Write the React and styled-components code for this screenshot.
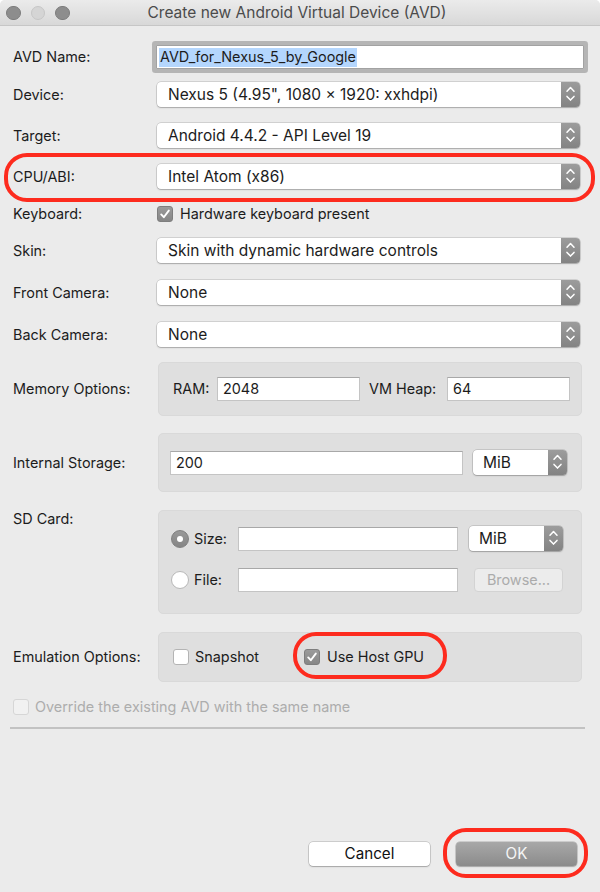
import React from 'react'
import styled, { createGlobalStyle } from 'styled-components'

const GlobalStyle = createGlobalStyle`
  html, body {
    margin: 0;
    padding: 0;
    background: #ffffff;
  }
  body {
    font-family: Inter, "Liberation Sans", Arial, sans-serif;
    -webkit-font-smoothing: antialiased;
  }
  * {
    box-sizing: border-box;
  }
`

// Window chrome
const Window = styled.div`
  width: 600px;
  height: 892px;
  display: flex;
  flex-direction: column;
  background: #ebebeb;
  border-radius: 5px 5px 0 0;
  overflow: hidden;
  font-size: 14.4px;
  line-height: 16px;
  color: #1c1c1c;
`
const TitleBar = styled.div`
  height: 26px;
  flex: none;
  display: grid;
  grid-template-columns: 1fr auto 1fr;
  align-items: center;
  background: linear-gradient(#ebebeb, #d8d8d8);
  border-bottom: 1px solid #c6c6c6;
`
const Lights = styled.div`
  display: flex;
  gap: 10px;
  padding-left: 6px;
  padding-top: 1px;
`
const Light = styled.span`
  width: 14.5px;
  height: 14.5px;
  border-radius: 50%;
  background: ${p => (p.$dim ? '#d5d5d5' : '#8d8d8d')};
  border: 1px solid ${p => (p.$dim ? '#c6c6c6' : '#7c7c7c')};
`
const Title = styled.div`
  color: #4b4b4b;
  font-size: 15.5px;
  line-height: 20px;
  margin-right: 6px;
  white-space: nowrap;
`

// Form layout
const Form = styled.div`
  flex: 1;
  display: flex;
  flex-direction: column;
`
const Row = styled.div`
  position: relative;
  display: flex;
  align-items: ${p => (p.$top ? 'flex-start' : 'center')};
  margin-top: ${p => p.$mt}px;
  padding-left: 13px;
`
const Label = styled.div`
  width: 144px;
  flex: none;
  padding-top: ${p => p.$pt || 0}px;
  white-space: nowrap;
`
const NameField = styled.div`
  width: 428px;
  height: 24px;
  margin-left: -1px;
  display: flex;
  align-items: center;
  padding-left: 2px;
  background: #fff;
  border: 1px solid #a2a2a2;
  border-radius: 1px;
  box-shadow: 0 0 0 4px #b5b5b5;
`
const Selection = styled.span`
  background: #b4d6fd;
  padding: 1px 1px 2px;
  white-space: nowrap;
`
const Select = styled.div`
  width: ${p => p.$w}px;
  height: 25px;
  flex: none;
  display: flex;
  align-items: center;
  margin-left: ${p => p.$ml || 0}px;
  font-size: 15.5px;
  line-height: 20px;
  background: #fff;
  border-radius: 4px;
  box-shadow: 0 0 0 0.5px rgba(0, 0, 0, 0.22), 0 1px 1.5px rgba(0, 0, 0, 0.2);
`
const SelectText = styled.span`
  flex: 1;
  padding-left: ${p => p.$pl || 11}px;
  white-space: nowrap;
`
const Stepper = styled.span`
  width: 19px;
  height: 100%;
  flex: none;
  border-radius: 0 4px 4px 0;
  background: linear-gradient(#9c9c9c, #838383);
  display: flex;
`
const Input = styled.div`
  width: ${p => p.$w}px;
  height: 24px;
  flex: none;
  display: flex;
  align-items: center;
  padding-left: 5px;
  background: #fff;
  border: 1px solid #c4c4c4;
  border-top-color: #a8a8a8;
`
const Box = styled.span`
  width: 16px;
  height: 16px;
  flex: none;
  display: flex;
  align-items: center;
  justify-content: center;
  border-radius: 3px;
  background: ${p =>
    p.$checked ? 'linear-gradient(#9b9b9b, #868686)' : p.$disabled ? '#f1f1f1' : '#ffffff'};
  border: 1px solid ${p => (p.$checked ? '#7e7e7e' : p.$disabled ? '#d6d6d6' : '#b4b4b4')};
`
const CheckItem = styled.div`
  position: relative;
  display: flex;
  align-items: center;
  gap: ${p => p.$gap || 6}px;
  width: ${p => (p.$w ? `${p.$w}px` : 'auto')};
  color: ${p => (p.$disabled ? '#adadad' : 'inherit')};
  white-space: nowrap;
`
const Radio = styled.span`
  width: 18px;
  height: 18px;
  flex: none;
  border-radius: 50%;
  display: flex;
  align-items: center;
  justify-content: center;
  background: ${p => (p.$on ? 'linear-gradient(#999, #858585)' : '#fff')};
  border: 1px solid ${p => (p.$on ? '#7f7f7f' : '#b8b8b8')};
  &::after {
    content: '';
    width: 6px;
    height: 6px;
    border-radius: 50%;
    background: #fff;
    display: ${p => (p.$on ? 'block' : 'none')};
  }
`
const RadioLabel = styled.div`
  width: 67px;
  flex: none;
  display: flex;
  align-items: center;
  gap: 5px;
`

// Grouped sections
const Group = styled.div`
  width: 424px;
  margin-left: 1px;
  min-height: ${p => p.$h}px;
  padding: ${p => p.$pad};
  display: flex;
  flex-direction: column;
  justify-content: ${p => (p.$stack ? 'flex-start' : 'center')};
  gap: 17px;
  background: #dfdfdf;
  border: 1px solid #d9d9d9;
  border-radius: 5px;
`
const GroupLine = styled.div`
  display: flex;
  align-items: center;
`
const InlineLabel = styled.span`
  width: ${p => p.$w}px;
  margin-left: ${p => p.$ml || 0}px;
  flex: none;
  white-space: nowrap;
`
const DisabledButton = styled.div`
  width: 89px;
  height: 24px;
  margin-left: 16px;
  display: flex;
  align-items: center;
  justify-content: center;
  color: #ababab;
  background: #ececec;
  border: 1px solid #d3d3d3;
  border-radius: 4px;
`
const Separator = styled.div`
  height: 2px;
  margin: 12px 15px 0 10px;
  background: #c2c2c2;
`

// Footer buttons
const Footer = styled.div`
  margin-top: auto;
  display: flex;
  justify-content: flex-end;
  gap: 26px;
  padding: 0 23px 26px 0;
`
const Button = styled.div`
  position: relative;
  width: 121px;
  height: 24px;
  display: flex;
  align-items: center;
  justify-content: center;
  font-size: 15.2px;
  line-height: 20px;
  border-radius: 4px;
  color: ${p => (p.$primary ? '#f5f5f5' : '#111')};
  background: ${p => (p.$primary ? 'linear-gradient(#a8a8a8, #8b8b8b)' : '#fff')};
  box-shadow: 0 0 0 0.5px rgba(0, 0, 0, 0.25), 0 1px 1.5px rgba(0, 0, 0, 0.2);
`

// Red annotation rings drawn over the screenshot
const Ring = styled.span`
  position: absolute;
  pointer-events: none;
  left: ${p => p.$l}px;
  top: ${p => p.$t}px;
  width: ${p => p.$w}px;
  height: ${p => p.$h}px;
  border: 4px solid #fd2b1e;
  border-radius: 23px;
`

const Chevrons = () => (
  <svg width="19" height="25" viewBox="0 0 19 25">
    <path d="M6 9.3 L9.5 5.6 L13 9.3" fill="none" stroke="#fff" strokeWidth="1.5" strokeLinecap="round" strokeLinejoin="round" />
    <path d="M6 14.4 L9.5 18.1 L13 14.4" fill="none" stroke="#fff" strokeWidth="1.5" strokeLinecap="round" strokeLinejoin="round" />
  </svg>
)

const Tick = ({ color = '#fff' }) => (
  <svg width="12" height="12" viewBox="0 0 12 12">
    <path d="M2.2 6.4 L4.8 9.2 L9.8 2.6" fill="none" stroke={color} strokeWidth="1.9" strokeLinecap="round" strokeLinejoin="round" />
  </svg>
)

const Popup = ({ w, ml, pl, children }) => (
  <Select $w={w} $ml={ml}>
    <SelectText $pl={pl}>{children}</SelectText>
    <Stepper>
      <Chevrons />
    </Stepper>
  </Select>
)

const Checkbox = ({ checked, disabled, label, w, gap, children }) => (
  <CheckItem $w={w} $gap={gap} $disabled={disabled}>
    <Box $checked={checked} $disabled={disabled}>{checked && <Tick />}</Box>
    <span>{label}</span>
    {children}
  </CheckItem>
)

const selects = [
  { label: 'Device:', value: 'Nexus 5 (4.95", 1080 × 1920: xxhdpi)', mt: 13 },
  { label: 'Target:', value: 'Android 4.4.2 - API Level 19', mt: 16 },
]

export default function App() {
  return (
    <Window>
      <GlobalStyle />
      <TitleBar>
        <Lights>
          <Light />
          <Light $dim />
          <Light />
        </Lights>
        <Title>Create new Android Virtual Device (AVD)</Title>
        <span />
      </TitleBar>

      <Form>
        <Row $mt={19}>
          <Label>AVD Name:</Label>
          <NameField>
            <Selection>AVD_for_Nexus_5_by_Google</Selection>
          </NameField>
        </Row>

        {selects.map(s => (
          <Row $mt={s.mt} key={s.label}>
            <Label>{s.label}</Label>
            <Popup w={423}>{s.value}</Popup>
          </Row>
        ))}

        <Row $mt={16}>
          <Label>CPU/ABI:</Label>
          <Popup w={423}>Intel Atom (x86)</Popup>
          <Ring $l={4} $t={-11} $w={591} $h={49} />
        </Row>

        <Row $mt={17}>
          <Label>Keyboard:</Label>
          <Checkbox checked gap={7} label="Hardware keyboard present" />
        </Row>

        <Row $mt={16}>
          <Label>Skin:</Label>
          <Popup w={423}>Skin with dynamic hardware controls</Popup>
        </Row>

        <Row $mt={17}>
          <Label>Front Camera:</Label>
          <Popup w={423}>None</Popup>
        </Row>

        <Row $mt={17}>
          <Label>Back Camera:</Label>
          <Popup w={423}>None</Popup>
        </Row>

        <Row $mt={15}>
          <Label>Memory Options:</Label>
          <Group $h={54} $pad="0 0 0 14px">
            <GroupLine>
              <InlineLabel $w={44}>RAM:</InlineLabel>
              <Input $w={143}>2048</Input>
              <InlineLabel $w={78} $ml={9}>VM Heap:</InlineLabel>
              <Input $w={123}>64</Input>
            </GroupLine>
          </Group>
        </Row>

        <Row $mt={17}>
          <Label>Internal Storage:</Label>
          <Group $h={59} $pad="0 0 0 11px">
            <GroupLine>
              <Input $w={293}>200</Input>
              <Popup w={94} ml={10} pl={10}>MiB</Popup>
            </GroupLine>
          </Group>
        </Row>

        <Row $mt={18} $top>
          <Label $pt={1}>SD Card:</Label>
          <Group $h={104} $stack $pad="15px 0 0 12px">
            <GroupLine>
              <RadioLabel>
                <Radio $on />
                <span>Size:</span>
              </RadioLabel>
              <Input $w={220} />
              <Popup w={94} ml={11} pl={10}>MiB</Popup>
            </GroupLine>
            <GroupLine>
              <RadioLabel>
                <Radio />
                <span>File:</span>
              </RadioLabel>
              <Input $w={220} />
              <DisabledButton>Browse...</DisabledButton>
            </GroupLine>
          </Group>
        </Row>

        <Row $mt={18}>
          <Label>Emulation Options:</Label>
          <Group $h={50} $pad="0 0 0 14px">
            <GroupLine>
              <Checkbox w={131} label="Snapshot" />
              <Checkbox checked gap={7} label="Use Host GPU">
                <Ring $l={-11} $t={-17} $w={154} $h={47} />
              </Checkbox>
            </GroupLine>
          </Group>
        </Row>

        <Row $mt={17}>
          <Checkbox disabled label="Override the existing AVD with the same name" />
        </Row>

        <Separator />

        <Footer>
          <Button>Cancel</Button>
          <Button $primary>
            OK
            <Ring $l={-13} $t={-14} $w={145} $h={50} />
          </Button>
        </Footer>
      </Form>
    </Window>
  )
}
